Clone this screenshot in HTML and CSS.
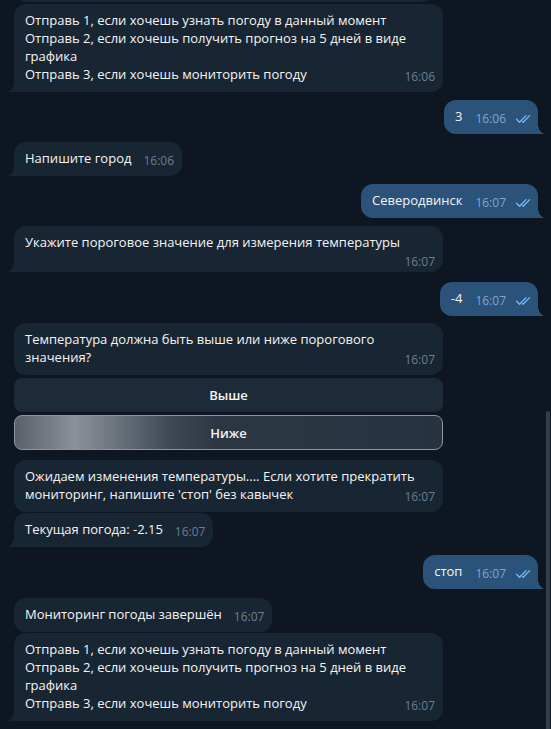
FILE: index.html
```html
<!DOCTYPE html>
<html lang="ru">
<head>
<meta charset="utf-8">
<title>Чат</title>
<link rel="stylesheet" href="styles.css">
</head>
<body>
<div class="chat">
  <div class="msg in prev"><div class="bubble"></div></div>

  <div class="msg in g2"><div class="bubble tail">Отправь 1, если хочешь узнать погоду в данный момент<br>Отправь 2, если хочешь получить прогноз на 5 дней в виде графика<br>Отправь 3, если хочешь мониторить погоду<span class="time">16:06</span></div></div>

  <div class="msg out g8"><div class="bubble tail">3<span class="time">16:06<svg class="check" viewBox="0 0 18 10" width="18" height="10"><path d="M1.5 5.2 L4.6 8.3 L11 1.6 M7.6 7.8 L8.2 8.3 L14.6 1.6"/></svg></span></div></div>

  <div class="msg in g8"><div class="bubble tail">Напишите город<span class="time">16:06</span></div></div>

  <div class="msg out g8"><div class="bubble tail">Северодвинск<span class="time">16:07<svg class="check" viewBox="0 0 18 10" width="18" height="10"><path d="M1.5 5.2 L4.6 8.3 L11 1.6 M7.6 7.8 L8.2 8.3 L14.6 1.6"/></svg></span></div></div>

  <div class="msg in g8"><div class="bubble tail wide">Укажите пороговое значение для измерения температуры<span class="time below">16:07</span></div></div>

  <div class="msg out g10"><div class="bubble tail">-4<span class="time">16:07<svg class="check" viewBox="0 0 18 10" width="18" height="10"><path d="M1.5 5.2 L4.6 8.3 L11 1.6 M7.6 7.8 L8.2 8.3 L14.6 1.6"/></svg></span></div></div>

  <div class="msg in g7">
    <div class="kb-msg">
      <div class="bubble">Температура должна быть выше или ниже порогового значения?<span class="time">16:07</span></div>
      <div class="keyboard">
        <button class="kb-btn">Выше</button>
        <button class="kb-btn active">Ниже</button>
      </div>
    </div>
  </div>

  <div class="msg in g10"><div class="bubble">Ожидаем изменения температуры.... Если хотите прекратить мониторинг, напишите 'стоп' без кавычек<span class="time">16:07</span></div></div>

  <div class="msg in g1"><div class="bubble tail">Текущая погода: -2.15<span class="time">16:07</span></div></div>

  <div class="msg out g8"><div class="bubble tail">стоп<span class="time">16:07<svg class="check" viewBox="0 0 18 10" width="18" height="10"><path d="M1.5 5.2 L4.6 8.3 L11 1.6 M7.6 7.8 L8.2 8.3 L14.6 1.6"/></svg></span></div></div>

  <div class="msg in g9"><div class="bubble">Мониторинг погоды завершён<span class="time">16:07</span></div></div>

  <div class="msg in g1"><div class="bubble tail">Отправь 1, если хочешь узнать погоду в данный момент<br>Отправь 2, если хочешь получить прогноз на 5 дней в виде графика<br>Отправь 3, если хочешь мониторить погоду<span class="time">16:07</span></div></div>
</div>
<div class="scrollbar"></div>
</body>
</html>
```

FILE: styles.css
```css
* { box-sizing: border-box; }

html, body {
  margin: 0;
  height: 100%;
  overflow: hidden;
}

body {
  background: #0e1621;
  font-family: "Open Sans", "Noto Sans", sans-serif;
  font-size: 13px;
  line-height: 18px;
  color: #f5f5f5;
}

.chat {
  display: flex;
  flex-direction: column;
  padding: 0 13px 0 14px;
}

.msg {
  display: flex;
}
.msg.in { justify-content: flex-start; }
.msg.out { justify-content: flex-end; }

.g1 { margin-top: 1px; }
.g2 { margin-top: 2px; }
.g7 { margin-top: 7px; }
.g8 { margin-top: 8px; }
.g9 { margin-top: 9px; }
.g10 { margin-top: 10px; }

.prev { margin-top: -28px; }
.prev .bubble { width: 420px; height: 30px; }

.bubble {
  position: relative;
  max-width: 429px;
  padding: 7px 8px 8px 11px;
  border-radius: 12px;
  background: #182533;
  overflow-wrap: break-word;
}
.bubble.wide { width: 429px; }
.out .bubble {
  background: #2b5278;
  padding-right: 5px;
}

.in .bubble.tail { border-bottom-left-radius: 0; }
.out .bubble.tail { border-bottom-right-radius: 0; }

.bubble.tail::before {
  content: "";
  position: absolute;
  bottom: 0;
  width: 7px;
  height: 10px;
}
.in .bubble.tail::before {
  left: -7px;
  background: radial-gradient(ellipse 7px 10px at 0 0, transparent 96%, #182533 100%);
}
.out .bubble.tail::before {
  right: -7px;
  background: radial-gradient(ellipse 7px 10px at 100% 0, transparent 96%, #2b5278 100%);
}

.time {
  float: right;
  margin-top: 5px;
  margin-left: 12px;
  font-size: 12px;
  line-height: 14px;
  color: #6d7f8f;
  white-space: nowrap;
  display: flex;
  align-items: center;
}
.time.below {
  float: none;
  display: block;
  text-align: right;
  margin: 4px 0 -5px 0;
}
.out .time {
  color: #7da8d3;
  margin-left: 13px;
}

.check {
  margin-left: 9px;
  fill: none;
  stroke: #72bcfd;
  stroke-width: 1.3;
  stroke-linecap: round;
  stroke-linejoin: round;
}

.kb-msg {
  width: 429px;
  display: flex;
  flex-direction: column;
}
.kb-msg .bubble { max-width: none; }

.keyboard {
  display: flex;
  flex-direction: column;
  gap: 3px;
  margin-top: 3px;
}

.kb-btn {
  height: 34px;
  border: 0;
  border-radius: 8px;
  background: #1d2a38;
  color: #f5f5f5;
  font-family: "Open Sans", "Noto Sans", sans-serif;
  font-size: 13px;
  font-weight: 600;
  cursor: pointer;
}
.kb-btn.active {
  height: 35px;
  border: 1px solid #8c96a2;
  background: linear-gradient(90deg, #5a6068 0%, #8b9198 14%, #6a727c 24%, #3f4955 36%, #2b3642 48%, #2c3744 60%, #26323f 100%);
}

.scrollbar {
  position: fixed;
  right: 1px;
  top: 411px;
  width: 4px;
  height: 330px;
  border-radius: 2px;
  background: #343e4a;
}
```
